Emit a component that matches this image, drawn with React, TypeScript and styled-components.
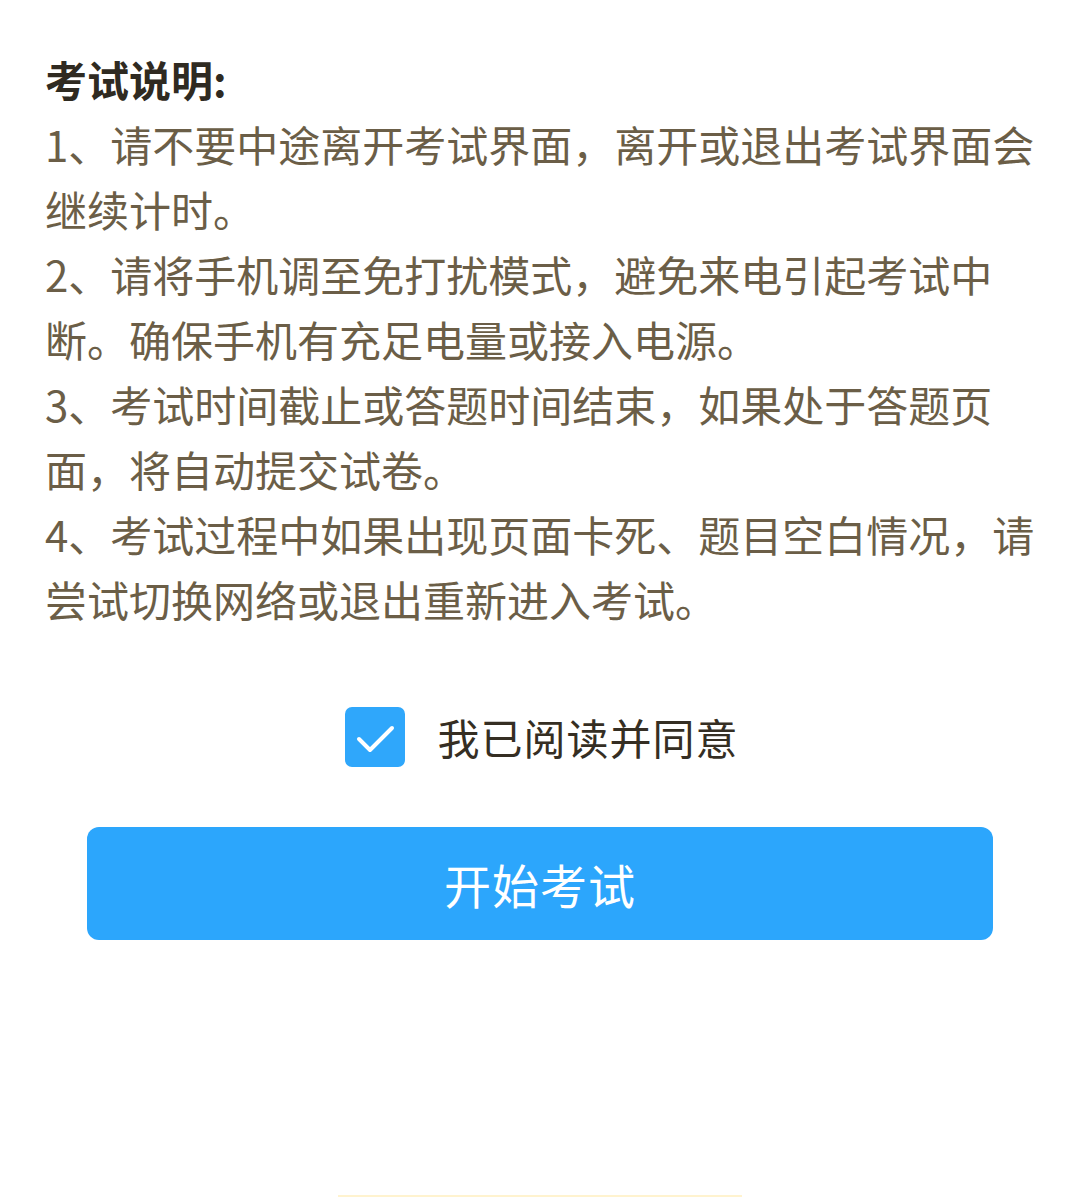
import React, { useState } from 'react'
import styled, { createGlobalStyle } from 'styled-components'

const GlobalStyle = createGlobalStyle`
  html, body {
    margin: 0;
    padding: 0;
    background: #ffffff;
  }
  body {
    font-family: "Noto Sans CJK SC", "Noto Sans", sans-serif;
  }
`

const rules = [
  '1、请不要中途离开考试界面，离开或退出考试界面会继续计时。',
  '2、请将手机调至免打扰模式，避免来电引起考试中断。确保手机有充足电量或接入电源。',
  '3、考试时间截止或答题时间结束，如果处于答题页面，将自动提交试卷。',
  '4、考试过程中如果出现页面卡死、题目空白情况，请尝试切换网络或退出重新进入考试。',
]

export default function App() {
  const [agreed, setAgreed] = useState(true)

  return (
    <Page>
      <GlobalStyle />
      <Notice>
        <Title>考试说明:</Title>
        {rules.map((rule) => (
          <Rule key={rule}>{rule}</Rule>
        ))}
      </Notice>
      <AgreeRow onClick={() => setAgreed(!agreed)}>
        <CheckBox checked={agreed}>
          {agreed && (
            <svg width="60" height="60" viewBox="0 0 60 60">
              <path
                d="M14 32 L25 43 L47 21"
                fill="none"
                stroke="#ffffff"
                strokeWidth="4"
                strokeLinecap="round"
                strokeLinejoin="round"
              />
            </svg>
          )}
        </CheckBox>
        <AgreeText>我已阅读并同意</AgreeText>
      </AgreeRow>
      <StartButton disabled={!agreed}>开始考试</StartButton>
      <HomeBar />
    </Page>
  )
}

const Page = styled.div`
  width: 1080px;
  min-height: 1197px;
  padding-top: 46px;
  box-sizing: border-box;
  display: flex;
  flex-direction: column;
  position: relative;
`

const Notice = styled.div`
  padding: 0 40px 0 45px;
`

const Title = styled.h2`
  margin: 0;
  font-size: 42px;
  font-weight: 700;
  line-height: 65px;
  color: #2f2a21;
`

const Rule = styled.p`
  margin: 0;
  font-size: 42px;
  font-weight: 400;
  line-height: 65px;
  color: #6b5e47;
`

const AgreeRow = styled.div`
  margin-top: 76px;
  padding-left: 4px;
  display: flex;
  align-items: center;
  justify-content: center;
  gap: 32px;
  cursor: pointer;
`

const CheckBox = styled.div<{ checked: boolean }>`
  width: 60px;
  height: 60px;
  border-radius: 7px;
  box-sizing: border-box;
  background: ${(p) => (p.checked ? '#2fa7fb' : '#ffffff')};
  border: ${(p) => (p.checked ? 'none' : '2px solid #c8c8c8')};
  display: flex;
`

const AgreeText = styled.span`
  font-size: 42px;
  font-weight: 400;
  letter-spacing: 1px;
  line-height: 60px;
  color: #352e23;
`

const StartButton = styled.button`
  margin: 60px 87px 0;
  height: 113px;
  border: none;
  border-radius: 12px;
  background: #2ca6fc;
  color: #ffffff;
  font-family: "Noto Sans CJK SC", "Noto Sans", sans-serif;
  font-size: 47px;
  font-weight: 400;
  letter-spacing: 1px;
  cursor: pointer;
  &:disabled {
    opacity: 0.5;
  }
`

const HomeBar = styled.div`
  position: absolute;
  left: 338px;
  bottom: 0;
  width: 404px;
  height: 2px;
  background: #fff3cf;
`
